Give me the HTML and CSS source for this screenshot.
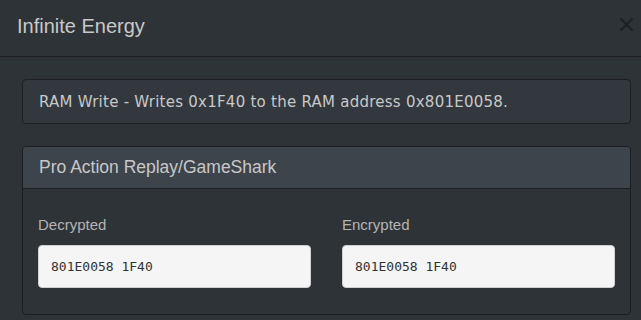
FILE: index.html
```html
<!DOCTYPE html>
<html lang="en">
<head>
  <meta charset="UTF-8">
  <title>Infinite Energy</title>
  <link rel="stylesheet" href="styles.css">
</head>
<body>

  <div class="modal">
    <div class="modal-header">
      <h4 class="modal-title">Infinite Energy</h4>
      <button class="close" aria-label="Close">
        <svg width="15" height="15" viewBox="0 0 15 15">
          <path d="M1.5 1.5 L13.5 13.5 M13.5 1.5 L1.5 13.5" stroke="currentColor" stroke-width="2.2" fill="none"/>
        </svg>
      </button>
    </div>

    <div class="modal-body">
      <div class="well">RAM Write - Writes 0x1F40 to the RAM address 0x801E0058.</div>

      <div class="panel">
        <div class="panel-heading">Pro Action Replay/GameShark</div>
        <div class="panel-body">
          <div class="field">
            <label>Decrypted</label>
            <input class="code" type="text" value="801E0058 1F40" readonly>
          </div>
          <div class="field">
            <label>Encrypted</label>
            <input class="code" type="text" value="801E0058 1F40" readonly>
          </div>
        </div>
      </div>
    </div>
  </div>

</body>
</html>
```

FILE: styles.css
```css
body {
  margin: 0;
  padding: 0;
  background: #2e3338;
  color: #c8c8c8;
  font-family: 'Liberation Sans', Arial, sans-serif;
  overflow: hidden;
}

.modal {
  width: 641px;
  height: 320px;
  background: #2e3338;
}

.modal-header {
  height: 57px;
  border-bottom: 1px solid #1c1e22;
  display: flex;
  align-items: center;
  justify-content: space-between;
  padding: 0 7px 0 17px;
  box-sizing: border-box;
}

.modal-title {
  margin: 0;
  font-size: 20px;
  font-weight: normal;
  color: #c8c8c8;
  padding-bottom: 3px;
}

.close {
  background: none;
  border: none;
  padding: 0;
  margin-bottom: 8px;
  color: #1d2024;
  display: flex;
}

.modal-body {
  padding: 22px 10px 0 22px;
}

.well {
  height: 45px;
  box-sizing: border-box;
  border: 1px solid #1c1e22;
  border-radius: 4px;
  background: #32383e;
  padding: 0 16px;
  display: flex;
  align-items: center;
  font-family: 'DejaVu Sans', Verdana, sans-serif;
  font-size: 15px;
  letter-spacing: 0.25px;
  color: #c8c8c8;
}

.panel {
  margin-top: 22px;
  border: 1px solid #1c1e22;
  border-radius: 4px;
  overflow: hidden;
}

.panel-heading {
  height: 42px;
  box-sizing: border-box;
  border-bottom: 1px solid #1c1e22;
  background: #3e444c;
  padding: 0 16px;
  display: flex;
  align-items: center;
  font-size: 17.5px;
}

.panel-body {
  display: grid;
  grid-template-columns: 1fr 1fr;
  gap: 31px;
  padding: 27px 15px 26px 15px;
}

.field label {
  display: block;
  font-size: 15px;
  line-height: 17px;
  color: #b4b4b4;
  margin-bottom: 12px;
}

.code {
  display: block;
  width: 100%;
  height: 43px;
  box-sizing: border-box;
  border: 1px solid #cfd0d2;
  border-radius: 4px;
  background: #f5f5f5;
  padding: 0 12px;
  font-family: 'DejaVu Sans Mono', monospace;
  font-size: 13px;
  color: #333;
  outline: none;
}
```
